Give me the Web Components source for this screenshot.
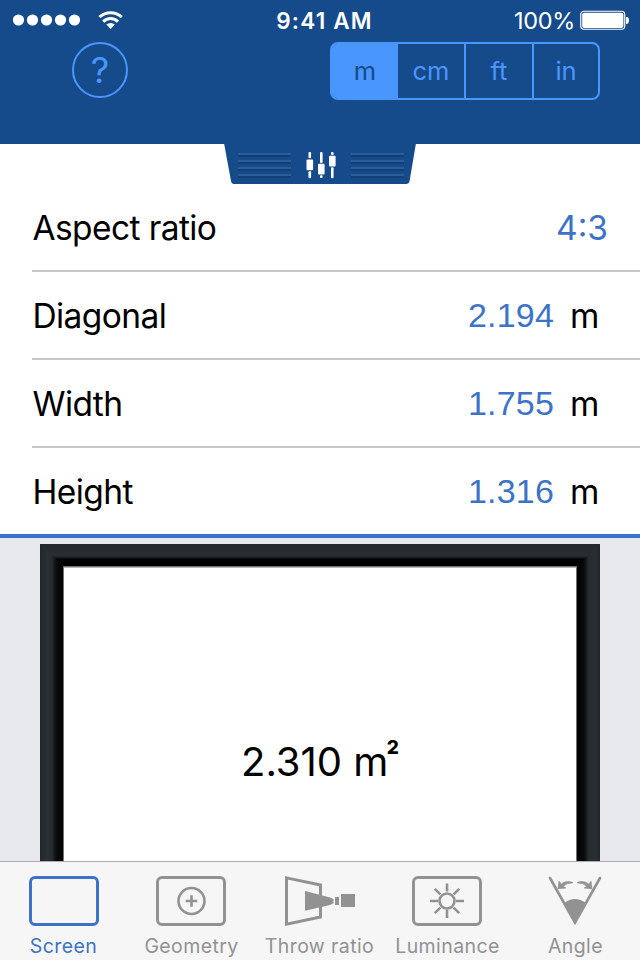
<!DOCTYPE html>
<html lang="en">
<head>
<meta charset="utf-8">
<title>Screen calculator</title>
<style>
  html, body { margin:0; height:100%; }
  body {
    font-family:Inter, "Liberation Sans", sans-serif;
    --navy:#154b8a;
    --sky:#4a96ff;
    --blue:#3d73c6;
    --grey:#929292;
  }
</style>
</head>
<body>
<screen-app></screen-app>

<script>
// Shared helper: open shadow root with the given markup
class BaseElement extends HTMLElement {
  connectedCallback() {
    if (this.shadowRoot) return;
    this.attachShadow({ mode: 'open' }).innerHTML = this.render();
  }
}

// Status bar: signal, wifi, clock, battery
class StatusBar extends BaseElement {
  render() {
    return `
      <style>
        :host {
          display:grid;
          grid-template-columns:1fr auto 1fr;
          align-items:center;
          height:40px;
          padding:0 10px 0 13px;
          color:#fff;
          box-sizing:border-box;
          white-space:nowrap;
        }
        svg { display:block; }
        .left { display:flex; align-items:center; gap:17px; }
        .time { font-size:22.5px; font-weight:600; letter-spacing:1.2px; padding-left:6px; }
        .right { display:flex; align-items:center; justify-content:flex-end; gap:5px; font-size:23.5px; letter-spacing:-0.35px; }
      </style>
      <div class="left">
        <svg width="68" height="12" fill="#fff">
          <circle cx="5.5" cy="6" r="5.6"/><circle cx="19.5" cy="6" r="5.6"/><circle cx="33.5" cy="6" r="5.6"/><circle cx="47.5" cy="6" r="5.6"/><circle cx="61.5" cy="6" r="5.6"/>
        </svg>
        <svg width="26" height="20" fill="none" stroke="#fff" stroke-width="3">
          <path d="M1.4 7.2A16.3 16.3 0 0 1 23.8 7.2"/>
          <path d="M5.2 11.6A10.4 10.4 0 0 1 20 11.6"/>
          <path d="M12.6 19L8.4 14.6A6 6 0 0 1 16.8 14.6Z" fill="#fff" stroke="none"/>
        </svg>
      </div>
      <div class="time">9:41 AM</div>
      <div class="right">
        <span>100%</span>
        <svg width="50" height="20">
          <rect x="0.75" y="1.25" width="44" height="18" rx="3.2" fill="none" stroke="#fff" stroke-width="1.2"/>
          <rect x="2.2" y="2.7" width="41.2" height="15.2" rx="1.8" fill="#fff"/>
          <path d="M46 7h1.2q1.8 .6 1.8 3.3t-1.8 3.7H46z" fill="#fff"/>
        </svg>
      </div>`;
  }
}

// Segmented unit picker
class UnitPicker extends BaseElement {
  render() {
    const selected = this.getAttribute('selected');
    const units = this.getAttribute('units').split(' ');
    return `
      <style>
        :host {
          display:grid;
          grid-template-columns:64px 68px 68px 66px;
          width:270px;
          height:58px;
          border:2px solid var(--sky);
          border-radius:8px;
          box-sizing:border-box;
          overflow:hidden;
        }
        button {
          font:400 25.5px/1 Inter, sans-serif;
          color:var(--sky);
          background:none;
          border:0;
          border-left:2px solid var(--sky);
          padding:0;
        }
        button:first-child { border-left:0; padding-right:4px; }
        .on { background:var(--sky); color:var(--navy); }
      </style>
      ${units.map(u => `<button class="${u === selected ? 'on' : ''}">${u}</button>`).join('')}`;
  }
}

class AppHeader extends BaseElement {
  render() {
    return `
      <style>
        :host { display:block; position:relative; height:144px; background:var(--navy); z-index:1; }
        .tools { display:flex; justify-content:space-between; margin-top:2px; padding:0 40px 0 72px; }
        .help {
          width:56px;
          height:56px;
          padding:0;
          border:2px solid var(--sky);
          border-radius:50%;
          background:none;
          color:var(--sky);
          font:400 36px/52px Inter, sans-serif;
        }
        /* pull-down handle hangs over the list */
        .handle { position:absolute; left:224px; top:143px; display:block; }
      </style>
      <status-bar></status-bar>
      <div class="tools">
        <button class="help">?</button>
        <unit-picker units="m cm ft in" selected="m"></unit-picker>
      </div>
      <svg class="handle" width="192" height="41">
        <path d="M0 0H192L185.6 38Q185 41 182 41H10Q7.5 41 7 38Z" fill="#154b8a"/>
        <g fill="#2d5c97">
          <path d="M14 10h53v2H14zM14 17h53v2H14zM14 24h53v2H14zM14 31h53v2H14z"/>
          <path d="M127 10h53v2h-53zM127 17h53v2h-53zM127 24h53v2h-53zM127 31h53v2h-53z"/>
        </g>
        <g fill="#123f74">
          <path d="M14 12h53v2H14zM14 19h53v2H14zM14 26h53v2H14zM14 33h53v2H14z"/>
          <path d="M127 12h53v2h-53zM127 19h53v2h-53zM127 26h53v2h-53zM127 33h53v2h-53z"/>
        </g>
        <g fill="#fff">
          <rect x="84.5" y="9" width="2.6" height="6.2" rx="1"/><rect x="82.5" y="16.5" width="6.6" height="10.8" rx="1"/><rect x="84.5" y="28.2" width="2.6" height="7" rx="1"/>
          <rect x="96" y="9" width="2.6" height="11" rx="1"/><rect x="94" y="20.7" width="6.6" height="10.8" rx="1"/><rect x="96" y="32.2" width="2.6" height="2.8" rx="1"/>
          <rect x="107" y="9" width="2.6" height="3" rx="1"/><rect x="105" y="12.7" width="6.6" height="10.8" rx="1"/><rect x="107" y="24.2" width="2.6" height="11" rx="1"/>
        </g>
      </svg>`;
  }
}

// One label / value / unit line
class MeasureRow extends BaseElement {
  render() {
    const unit = this.getAttribute('unit');
    return `
      <style>
        :host {
          display:flex;
          align-items:center;
          height:88px;
          margin-left:32px;
          padding-right:32px;
          border-bottom:2px solid #c8c7cc;
          box-sizing:border-box;
          font-size:33.5px;
          line-height:40px;
          color:#000;
          white-space:nowrap;
        }
        :host(:last-of-type) { border-bottom:0; height:86px; }
        .label { flex:1; letter-spacing:-0.6px; padding:2px 0 0 0.5px; }
        .value { color:var(--blue); padding-top:2px; }
        .value.num { font-family:"Liberation Sans", sans-serif; font-size:34px; letter-spacing:0.2px; padding-top:0; }
        .unit { width:39px; margin-left:16px; padding-top:2px; margin-right:-1px; }
      </style>
      <span class="label"><slot></slot></span>
      <span class="value ${unit ? 'num' : ''}">${this.getAttribute('value')}</span>
      ${unit ? `<span class="unit">${unit}</span>` : ''}`;
  }
}

// Projection screen with its black frame, cut off by the tab bar
class ScreenPreview extends BaseElement {
  render() {
    return `
      <style>
        :host { display:block; flex:1; min-height:0; overflow:hidden; background:#e7e9ed; padding:6px 40px 0; box-sizing:border-box; }
        .frame { display:grid; width:560px; height:420px; }
        .frame > * { grid-area:1 / 1; }
        .area { align-self:start; justify-self:center; margin-top:194px; font-size:40px; line-height:48px; color:#000; white-space:nowrap; }
        sup { font-size:19px; font-weight:800; line-height:0; vertical-align:22px; margin-left:-1.5px; }
      </style>
      <div class="frame">
        <svg width="560" height="420">
          <defs>
            <linearGradient id="top" x2="0" y2="1">
              <stop offset="0" stop-color="#23292b"/><stop offset=".5" stop-color="#292e30"/><stop offset=".58" stop-color="#1c2022"/><stop offset=".66" stop-color="#020303"/><stop offset="1" stop-color="#000"/>
            </linearGradient>
            <linearGradient id="side">
              <stop offset="0" stop-color="#202729"/><stop offset=".3" stop-color="#2a3036"/><stop offset=".5" stop-color="#262c30"/><stop offset=".6" stop-color="#15191b"/><stop offset=".72" stop-color="#080b0d"/><stop offset="1" stop-color="#000"/>
            </linearGradient>
            <linearGradient id="side2">
              <stop offset="0" stop-color="#000"/><stop offset=".3" stop-color="#060809"/><stop offset=".42" stop-color="#14181a"/><stop offset=".52" stop-color="#262b30"/><stop offset=".75" stop-color="#2a2f35"/><stop offset="1" stop-color="#202729"/>
            </linearGradient>
          </defs>
          <rect width="560" height="23" fill="url(#top)"/>
          <path d="M0 0L24 23V420H0z" fill="url(#side)"/>
          <path d="M560 0L536 23V420H560z" fill="url(#side2)"/>
          <rect x="23" y="22" width="514" height="398" fill="#737373"/>
          <rect x="24" y="23.5" width="512" height="397" fill="#fff"/>
        </svg>
        <div class="area">2.310 m<sup>2</sup></div>
      </div>`;
  }
}

const BOX = '<rect x="1.5" y="1.5" width="67" height="47" rx="4.5" stroke-width="3"/>';

const ICONS = {
  screen: `<g transform="translate(1)">${BOX}</g>`,
  geometry: `${BOX}<circle cx="35.5" cy="25" r="13" stroke-width="2.6"/><path d="M35.5 19.2v11.6M29.7 25h11.6" stroke-width="2.6"/>`,
  throw: `
    <g transform="translate(1)">
      <path d="M1.5 1.9L35.5 9V41L1.5 48.1Z" stroke-width="3"/>
      <path d="M20 15L45 21.5L48.5 23V27.3L45 29L20 34.8Z" fill="currentColor" stroke="none"/>
      <path d="M50 21h4v8h-4zM56 18h14v13H56z" fill="currentColor" stroke="none"/>
    </g>`,
  luminance: `${BOX}
    <circle cx="35" cy="25" r="7.5" stroke-width="2.6"/>
    <path d="M35 7.5v8M35 34v8M18 25h8M44 25h8M22.8 12.8l5.6 5.6M41.6 31.6l5.6 5.6M47.2 12.8l-5.6 5.6M28.4 31.6l-5.6 5.6" stroke-width="2.6"/>`,
  angle: `
    <path d="M10 2L35 46.5L60 2" stroke-width="2.6" stroke-linecap="round" stroke-linejoin="miter"/>
    <path d="M24.3 27Q35 19 45.7 27L35 48Z" fill="currentColor" stroke="none"/>
    <path d="M32.5 6.2Q25.5 4.2 21 8.2L19 5.2L18 12.8L25.8 12L23.4 10.2Q26.5 6.8 32.5 7Z" fill="currentColor" stroke="currentColor" stroke-width=".7"/>
    <path d="M37.5 6.2Q44.5 4.2 49 8.2L51 5.2L52 12.8L44.2 12L46.6 10.2Q43.5 6.8 37.5 7Z" fill="currentColor" stroke="currentColor" stroke-width=".7"/>`
};

class TabItem extends BaseElement {
  render() {
    return `
      <style>
        :host {
          flex:1 1 0;
          display:flex;
          flex-direction:column;
          align-items:center;
          padding:14px 2px 0 0;
          color:var(--grey);
          font-size:19.5px;
          line-height:24px;
          letter-spacing:0.4px;
          white-space:nowrap;
          box-sizing:border-box;
        }
        :host([active]) { color:var(--blue); }
        svg { display:block; margin-bottom:8px; overflow:visible; }
        span { padding-left:1px; }
      </style>
      <svg width="70" height="50" fill="none" stroke="currentColor">${ICONS[this.getAttribute('icon')]}</svg>
      <span><slot></slot></span>`;
  }
}

class TabBar extends BaseElement {
  render() {
    return `
      <style>
        :host { display:flex; height:99px; border-top:1px solid #acacac; background:#f6f6f6; box-sizing:border-box; }
      </style>
      <slot></slot>`;
  }
}

class ScreenApp extends BaseElement {
  render() {
    return `
      <style>
        :host { display:flex; flex-direction:column; width:640px; height:960px; overflow:hidden; background:#fff; }
        .list { padding-top:40px; border-bottom:4px solid var(--blue); }
      </style>
      <app-header></app-header>
      <div class="list">
        <measure-row value="4:3">Aspect ratio</measure-row>
        <measure-row value="2.194" unit="m">Diagonal</measure-row>
        <measure-row value="1.755" unit="m">Width</measure-row>
        <measure-row value="1.316" unit="m">Height</measure-row>
      </div>
      <screen-preview></screen-preview>
      <tab-bar>
        <tab-item icon="screen" active>Screen</tab-item>
        <tab-item icon="geometry">Geometry</tab-item>
        <tab-item icon="throw">Throw ratio</tab-item>
        <tab-item icon="luminance">Luminance</tab-item>
        <tab-item icon="angle">Angle</tab-item>
      </tab-bar>`;
  }
}

customElements.define('status-bar', StatusBar);
customElements.define('unit-picker', UnitPicker);
customElements.define('app-header', AppHeader);
customElements.define('measure-row', MeasureRow);
customElements.define('screen-preview', ScreenPreview);
customElements.define('tab-item', TabItem);
customElements.define('tab-bar', TabBar);
customElements.define('screen-app', ScreenApp);
</script>
</body>
</html>
